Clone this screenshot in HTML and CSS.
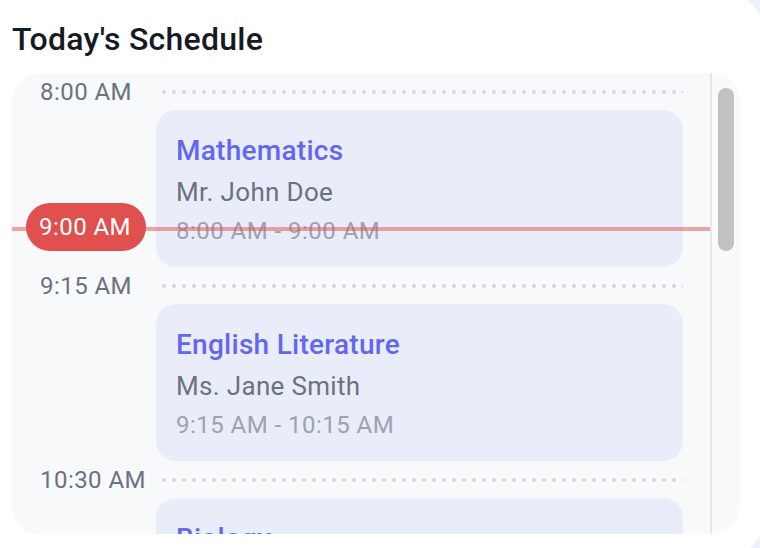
FILE: index.html
```html
<!DOCTYPE html>
<html lang="en">
<head>
    <meta charset="UTF-8">
    <meta name="viewport" content="width=device-width, initial-scale=1.0">
    <title>Today's Schedule</title>
    <link rel="stylesheet" href="styles.css">
</head>
<body>
    <div class="panel">
        <h2 class="panel-title">Today's Schedule</h2>

        <div class="schedule">
            <div class="timeline">
                <div class="slot-time">
                    <span class="time-label">8:00 AM</span>
                    <span class="dots"></span>
                </div>
                <div class="session">
                    <div class="session-name">Mathematics</div>
                    <div class="session-teacher">Mr. John Doe</div>
                    <div class="session-time">8:00 AM - 9:00 AM</div>
                </div>

                <div class="slot-time">
                    <span class="time-label">9:15 AM</span>
                    <span class="dots"></span>
                </div>
                <div class="session">
                    <div class="session-name">English Literature</div>
                    <div class="session-teacher">Ms. Jane Smith</div>
                    <div class="session-time">9:15 AM - 10:15 AM</div>
                </div>

                <div class="slot-time">
                    <span class="time-label">10:30 AM</span>
                    <span class="dots"></span>
                </div>
                <div class="session">
                    <div class="session-name">Biology</div>
                    <div class="session-teacher">Dr. Emily Brown</div>
                    <div class="session-time">10:30 AM - 11:30 AM</div>
                </div>

                <!-- current time marker -->
                <div class="now-line"></div>
                <div class="now-badge">9:00 AM</div>
            </div>

            <div class="scrollbar">
                <div class="scrollbar-thumb"></div>
            </div>
        </div>
    </div>
</body>
</html>
```

FILE: styles.css
```css
body {
    margin: 0;
    background: #eef0fb;
    font-family: Roboto, "Liberation Sans", Arial, sans-serif;
    overflow: hidden;
}
.panel {
    width: 766px;
    height: 570px;
    margin-top: -10px;
    padding-top: 25px;
    box-sizing: border-box;
    background: #fff;
    border-radius: 0 48px 48px 0;
}
.panel-title {
    margin: 0 0 10px 12px;
    font-size: 32px;
    line-height: 48px;
    font-weight: 500;
    letter-spacing: 0.25px;
    color: #151a23;
}
.schedule {
    display: flex;
    width: 728px;
    height: 461px;
    margin-left: 12px;
    background: #f8f9fb;
    border-radius: 28px;
    overflow: hidden;
}
.timeline {
    flex: 1;
    position: relative;
    padding: 1px 27px 0 28px;
    overflow: hidden;
}
.slot-time {
    display: flex;
    align-items: center;
    height: 36px;
}
.time-label {
    width: 120px;
    font-size: 24px;
    line-height: 36px;
    letter-spacing: 0.45px;
    color: #6b7280;
}
.dots {
    flex: 1;
    height: 4px;
    background: radial-gradient(circle, #d6d9df 1.6px, transparent 2.2px) -1px 0 / 10px 4px repeat-x;
}
.session {
    margin: 0 0 1px 116px;
    padding: 20px 20px 18px;
    background: #e9edfa;
    border-radius: 20px;
    line-height: 1.5;
}
.session-name {
    font-size: 28px;
    font-weight: 500;
    letter-spacing: 0.27px;
    color: #6366f1;
}
.session-teacher {
    margin-top: 1px;
    font-size: 26px;
    letter-spacing: 0.33px;
    color: #6b7280;
}
.session-time {
    margin-top: 1px;
    font-size: 24px;
    letter-spacing: 0.47px;
    color: #9ca3af;
}
.now-line {
    position: absolute;
    top: 154px;
    left: 0;
    right: 0;
    height: 4px;
    background: rgba(224, 80, 78, 0.5);
}
.now-badge {
    position: absolute;
    top: 130px;
    left: 14px;
    padding: 6px 15px 6px 13px;
    font-size: 24px;
    line-height: 36px;
    letter-spacing: 0.45px;
    color: #fff;
    background: #e0504e;
    border-radius: 24px;
}
.scrollbar {
    width: 28px;
    padding: 15px 6px 0 6px;
    box-sizing: border-box;
    flex: 0 0 30px;
    background: #fafafa;
    border-left: 2px solid #e6e6e6;
}
.scrollbar-thumb {
    height: 163px;
    background: #c1c1c1;
    border-radius: 8px;
}
```
